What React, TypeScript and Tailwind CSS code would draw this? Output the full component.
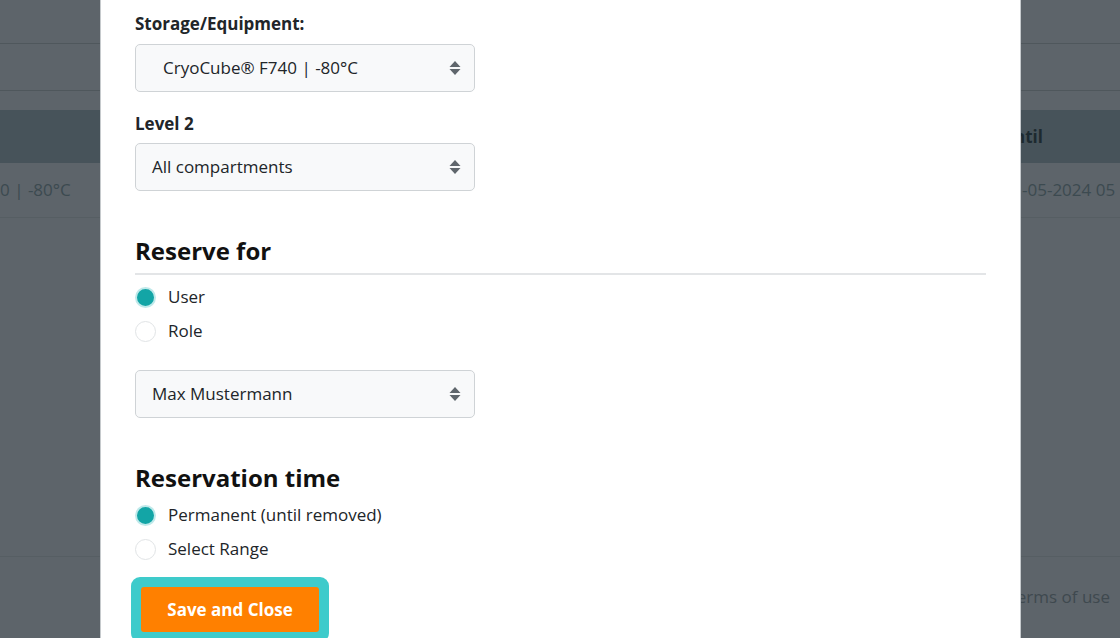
const FONT = "font-['Open_Sans','Noto_Sans',sans-serif]"

function SelectArrows() {
  return (
    <svg className="w-[14px] h-[16px]" viewBox="0 0 14 16" fill="#5f666c">
      <path d="M7 1 L12.5 7 H1.5 Z" />
      <path d="M7 15 L12.5 9 H1.5 Z" />
    </svg>
  )
}

function FakeSelect({ value, indent = false }: { value: string; indent?: boolean }) {
  return (
    <div className="w-[340px] h-[48px] flex items-center justify-between rounded-[5px] border border-[#cfd3d6] bg-[#f8f9fa] pl-4 pr-3 text-[17px] text-[#212529]">
      <span className={indent ? 'pl-[11px]' : ''}>{value}</span>
      <SelectArrows />
    </div>
  )
}

function Radio({ label, checked }: { label: string; checked?: boolean }) {
  return (
    <label className="flex items-center gap-[12px] h-[34px] text-[17px] text-[#212529]">
      {checked ? (
        <span className="w-[21px] h-[21px] rounded-full bg-[#13a5a6] border-2 border-[#bfe9ea]" />
      ) : (
        <span className="w-[21px] h-[21px] rounded-full bg-white border border-[#e1e4e6]" />
      )}
      {label}
    </label>
  )
}

export default function App() {
  return (
    <div className={`relative w-[1120px] h-[638px] overflow-hidden bg-[#5d646a] ${FONT}`}>
      {/* dimmed page behind the modal */}
      <div className="flex flex-col h-full">
        <div className="h-[44px] border-b border-[#4f575c]" />
        <div className="h-[47px] border-b border-[#4f575c]" />
        <div className="h-[19px]" />
        <div className="h-[53px] bg-[#47535a] flex items-center justify-end pr-[77px] text-[17px] font-bold text-[#1d2a30]">
          ntil
        </div>
        <div className="h-[55px] border-b border-[#565e63] flex items-center justify-between text-[17px] text-[#3c4a50]">
          <span>0 | -80°C</span>
          <span className="w-[98px] whitespace-nowrap">-05-2024 05</span>
        </div>
        <div className="flex-1 border-b border-[#565e63]" />
        <div className="h-[81px] flex items-center justify-end pr-[10px] pb-[2px] text-[17px] text-[#3f494f]">
          Terms of use
        </div>
      </div>

      {/* modal */}
      <div className="absolute left-[100px] top-0 w-[921px] h-full bg-white border-x border-[#c6cacd] overflow-hidden">
        <div className="pl-[34px] pr-[34px] pt-[12px] flex flex-col">
          <div className="text-[17px] font-bold text-[#212529] leading-[24px]">Storage/Equipment:</div>
          <div className="mt-[8px]">
            <FakeSelect value="CryoCube® F740 | -80°C" indent />
          </div>
          <div className="mt-[20px] text-[17px] font-bold text-[#212529] leading-[24px]">Level 2</div>
          <div className="mt-[7px]">
            <FakeSelect value="All compartments" />
          </div>

          <h2 className="mt-[44px] text-[24px] font-bold text-[#111] leading-[32px]">Reserve for</h2>
          <div className="mt-[6px] h-[2px] bg-[#e3e5e7] w-[851px]" />
          <div className="mt-[5px] flex flex-col">
            <Radio label="User" checked />
            <Radio label="Role" />
          </div>
          <div className="mt-[22px]">
            <FakeSelect value="Max Mustermann" />
          </div>

          <h2 className="mt-[43px] text-[24px] font-bold text-[#111] leading-[34px]">Reservation time</h2>
          <div className="mt-[3px] flex flex-col">
            <Radio label="Permanent (until removed)" checked />
            <Radio label="Select Range" />
          </div>
          <div className="mt-[11px] -ml-[4px] self-start rounded-[9px] bg-[#3ecbcb] p-[10px]">
            <button className="w-[178px] h-[45px] rounded-[3px] bg-[#ff8000] text-white text-[17px] font-bold">
              Save and Close
            </button>
          </div>
        </div>
      </div>
    </div>
  )
}
